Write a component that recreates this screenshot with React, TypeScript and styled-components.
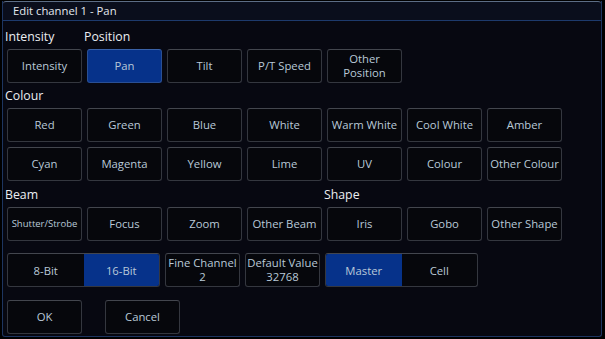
import styled, { createGlobalStyle } from 'styled-components';

const GlobalStyle = createGlobalStyle`
  html, body {
    margin: 0;
    padding: 0;
    background: #000;
    font-family: "Open Sans", "Noto Sans", sans-serif;
  }
`;

const Screen = styled.div`
  width: 605px;
  height: 339px;
  padding: 1px 0 0 2px;
  box-sizing: border-box;
  background: #000;
`;

const Dialog = styled.div`
  width: 600px;
  height: 336px;
  box-sizing: border-box;
  border: 1px solid #1d3560;
  border-top: none;
  border-radius: 0 0 3px 3px;
  background: #070811;
  display: flex;
  flex-direction: column;
`;

const TitleBar = styled.div`
  height: 20px;
  box-sizing: border-box;
  border-top: 1px solid #5c6d85;
  border-bottom: 1px solid #1d3a6c;
  border-radius: 3px 3px 0 0;
  background: #0a0e1c;
  color: #e4e8ee;
  font-size: 11.3px;
  line-height: 18px;
  padding-left: 10px;
`;

const Body = styled.div`
  padding: 7px 0 0 4px;
  display: flex;
  flex-direction: column;
`;

const LabelRow = styled.div`
  display: flex;
  height: 18px;
  margin-bottom: 3px;
`;

const Label = styled.div<{ $width?: number }>`
  width: ${({ $width }) => ($width ? `${$width}px` : 'auto')};
  color: #eceef2;
  font-size: 12.3px;
  line-height: 18px;
  margin-left: -2px;
`;

const Row = styled.div<{ $gap?: number; $after?: number }>`
  display: flex;
  gap: ${({ $gap }) => $gap ?? 5}px;
  margin-bottom: ${({ $after }) => $after ?? 5}px;
`;

const Button = styled.div<{ $active?: boolean; $small?: boolean }>`
  width: 75px;
  height: 34px;
  box-sizing: border-box;
  border: 1px solid ${({ $active }) => ($active ? '#2a4f93' : '#34373f')};
  border-top-color: ${({ $active }) => ($active ? '#3a62a8' : '#43464e')};
  border-radius: 3px;
  background: ${({ $active }) => ($active ? '#06328a' : '#06070c')};
  color: #b9c9d8;
  font-size: ${({ $small }) => ($small ? '9.5px' : '11.3px')};
  line-height: 14px;
  display: flex;
  align-items: center;
  justify-content: center;
  text-align: center;
  white-space: nowrap;
`;

const Segmented = styled.div`
  width: 153px;
  height: 34px;
  box-sizing: border-box;
  border: 1px solid #34373f;
  border-top-color: #43464e;
  border-radius: 3px;
  background: #06070c;
  display: flex;
  overflow: hidden;
`;

const Segment = styled.div<{ $active?: boolean }>`
  flex: 1;
  background: ${({ $active }) => ($active ? '#06328a' : 'transparent')};
  color: #b9c9d8;
  font-size: 11.3px;
  display: flex;
  align-items: center;
  justify-content: center;
`;

const colourRow1 = ['Red', 'Green', 'Blue', 'White', 'Warm White', 'Cool White', 'Amber'];
const colourRow2 = ['Cyan', 'Magenta', 'Yellow', 'Lime', 'UV', 'Colour', 'Other Colour'];

export default function App() {
  return (
    <Screen>
      <GlobalStyle />
      <Dialog>
        <TitleBar>Edit channel 1 - Pan</TitleBar>
        <Body>
          <LabelRow>
            <Label $width={81}>Intensity</Label>
            <Label>Position</Label>
          </LabelRow>
          <Row $after={4}>
            <Button>Intensity</Button>
            <Button $active>Pan</Button>
            <Button>Tilt</Button>
            <Button>P/T Speed</Button>
            <Button>
              Other
              <br />
              Position
            </Button>
          </Row>

          <LabelRow>
            <Label>Colour</Label>
          </LabelRow>
          <Row>
            {colourRow1.map((c) => (
              <Button key={c}>{c}</Button>
            ))}
          </Row>
          <Row>
            {colourRow2.map((c) => (
              <Button key={c}>{c}</Button>
            ))}
          </Row>

          <LabelRow>
            <Label $width={321}>Beam</Label>
            <Label>Shape</Label>
          </LabelRow>
          <Row $after={12}>
            <Button $small>Shutter/Strobe</Button>
            <Button>Focus</Button>
            <Button>Zoom</Button>
            <Button>Other Beam</Button>
            <Button>Iris</Button>
            <Button>Gobo</Button>
            <Button>Other Shape</Button>
          </Row>

          <Row $after={13}>
            <Segmented>
              <Segment>8-Bit</Segment>
              <Segment $active>16-Bit</Segment>
            </Segmented>
            <Button>
              Fine Channel
              <br />2
            </Button>
            <Button>
              Default Value
              <br />
              32768
            </Button>
            <Segmented>
              <Segment $active>Master</Segment>
              <Segment>Cell</Segment>
            </Segmented>
          </Row>

          <Row $gap={23}>
            <Button>OK</Button>
            <Button>Cancel</Button>
          </Row>
        </Body>
      </Dialog>
    </Screen>
  );
}
